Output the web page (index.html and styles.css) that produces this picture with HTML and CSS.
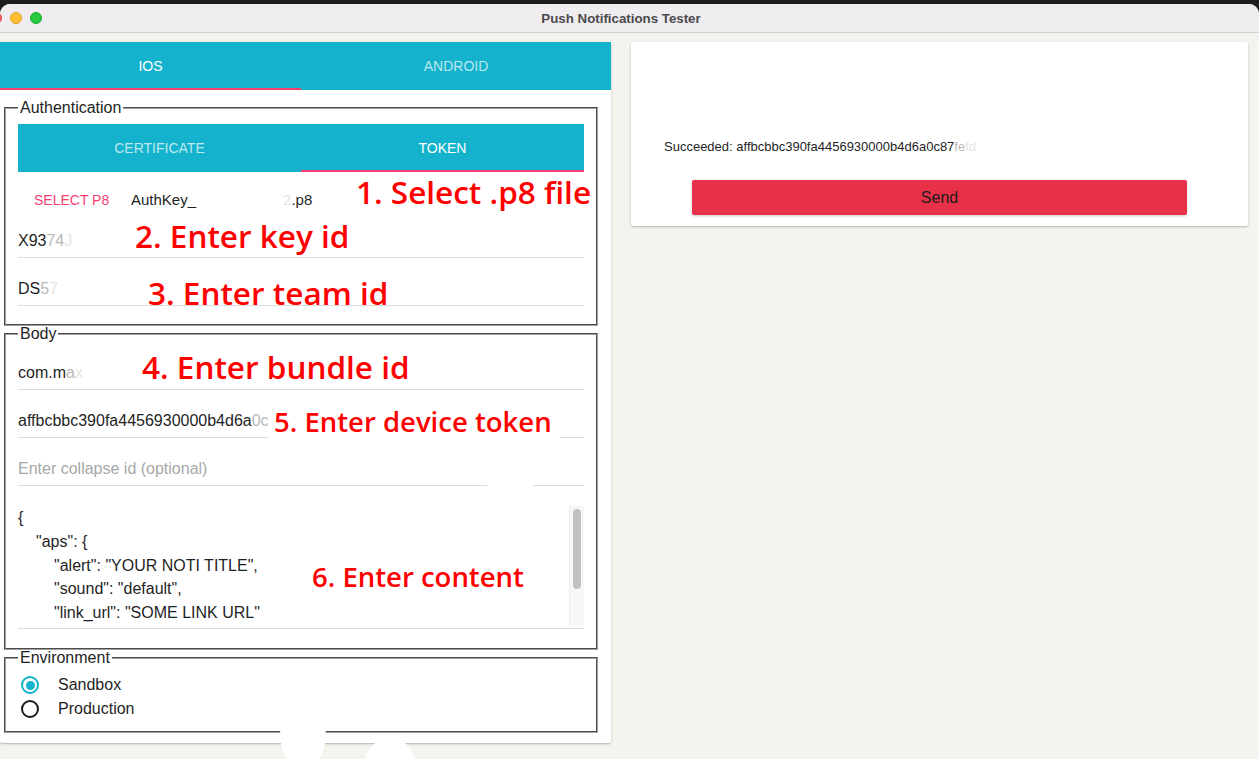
FILE: index.html
```html
<!DOCTYPE html>
<html>
<head>
<meta charset="utf-8">
<title>Push Notifications Tester</title>
<link rel="stylesheet" href="styles.css">
</head>
<body>
<div class="window">
  <div class="titlebar">
    <div class="lights">
      <span class="light red"></span>
      <span class="light yellow"></span>
      <span class="light green"></span>
    </div>
    <div class="title">Push Notifications Tester</div>
    <div></div>
  </div>
  <div class="content">
    <div class="card left">
      <div class="tabs main-tabs">
        <div class="tab first active">IOS</div>
        <div class="tab">ANDROID</div>
      </div>
      <div class="forms">
        <fieldset class="group auth">
          <legend>Authentication</legend>
          <div class="tabs sub-tabs">
            <div class="tab">CERTIFICATE</div>
            <div class="tab active">TOKEN</div>
          </div>
          <div class="file-row">
            <span class="btn-text">SELECT P8</span>
            <span class="file-name">AuthKey_<span class="gap"></span><span class="fade2">2</span>.p8</span>
          </div>
          <div class="field"><span>X93<span class="fade1">74</span><span class="fade2">J</span></span></div>
          <div class="field"><span>DS<span class="fade1">5</span><span class="fade2">7</span></span></div>
        </fieldset>
        <fieldset class="group body">
          <legend>Body</legend>
          <div class="field"><span>com.m<span class="fade1">a</span><span class="fade2">x</span></span></div>
          <div class="field"><span>affbcbbc390fa4456930000b4d6a<span class="fade1">0c</span></span></div>
          <div class="field placeholder"><span>Enter collapse id (optional)</span></div>
          <div class="editor">
            <div class="code">
              <div class="line">{</div>
              <div class="line i1">"aps": {</div>
              <div class="line i2">"alert": "YOUR NOTI TITLE",</div>
              <div class="line i2">"sound": "default",</div>
              <div class="line i2">"link_url": "SOME LINK URL"</div>
            </div>
            <div class="scrollbar"><div class="thumb"></div></div>
          </div>
        </fieldset>
        <fieldset class="group env">
          <legend>Environment</legend>
          <div class="radio-row"><span class="radio checked"></span><span class="radio-label">Sandbox</span></div>
          <div class="radio-row"><span class="radio"></span><span class="radio-label">Production</span></div>
        </fieldset>
      </div>

      <div class="note n1">1. Select .p8 file</div>
      <div class="note n2">2. Enter key id</div>
      <div class="note n3">3. Enter team id</div>
      <div class="note n4">4. Enter bundle id</div>
      <div class="note small n5">5. Enter device token</div>
      <div class="note small n6">6. Enter content</div>
      <div class="mask m1"></div>
    </div>

    <div class="card right">
      <div class="result">Succeeded: affbcbbc390fa4456930000b4d6a0c87<span class="fade1">fe</span><span class="fade2">fd</span></div>
      <div class="send">Send</div>
    </div>
  </div>
  <div class="blob b1"></div>
  <div class="blob b2"></div>
</div>
</body>
</html>
```
FILE: styles.css
```css
html, body {
  margin: 0;
  padding: 0;
}
body {
  width: 1259px;
  height: 759px;
  overflow: hidden;
  background: #1d1d1f;
  font-family: "Liberation Sans", Arial, sans-serif;
  color: #1f1f1f;
}
.window {
  position: relative;
  margin-top: 4px;
  height: 755px;
  background: #f4f3ed;
  border-radius: 10px 10px 0 0;
  overflow: hidden;
}
.titlebar {
  height: 28px;
  margin-left: -17px;
  background: #efedf0;
  border-bottom: 1px solid #d3d1d3;
  display: grid;
  grid-template-columns: 1fr auto 1fr;
  align-items: center;
}
.lights {
  display: flex;
  gap: 8px;
  margin-left: 7px;
}
.light {
  width: 12px;
  height: 12px;
  border-radius: 50%;
  box-sizing: border-box;
}
.red { background: #fe5f57; border: 0.5px solid #e0443e; }
.yellow { background: #febc2e; border: 0.5px solid #dea123; }
.green { background: #28c840; border: 0.5px solid #1aab29; }
.title {
  font-size: 13.3px;
  font-weight: bold;
  color: #4b4a4c;
}
.content {
  display: flex;
  align-items: flex-start;
  gap: 20px;
  padding-top: 9px;
}
.card {
  background: #fff;
  border-radius: 2px;
  box-shadow: 0 1px 3px rgba(0,0,0,0.18), 0 1px 1px rgba(0,0,0,0.10);
}
.left {
  width: 611px;
  position: relative;
}
.tabs {
  display: flex;
  background: #14b2cc;
}
.tab {
  flex: 1;
  display: flex;
  align-items: center;
  justify-content: center;
  color: rgba(255,255,255,0.72);
  font-size: 14px;
  box-sizing: border-box;
  border-bottom: 2px solid transparent;
  padding-top: 2px;
}
.tab.active {
  color: #fff;
  border-bottom-color: #f73f72;
}
.main-tabs .tab { height: 48px; }
.main-tabs .tab.first { flex: 0 0 301px; }
.sub-tabs { margin-top: 8px; }
.sub-tabs .tab { height: 48px; }

.forms {
  padding: 10px 13px 10px 4px;
}
.group {
  margin: 0;
  border: 2px groove #a0a0a0;
  padding: 0 12px;
  min-width: 0;
}
.group legend {
  font-size: 16px;
  line-height: 16px;
  padding: 0 2px;
  color: #1f1f1f;
}
.auth { padding-bottom: 18px; }
.body { padding-bottom: 19px; }
.env { padding-top: 7px; padding-bottom: 10px; }

.file-row {
  height: 38px;
  display: flex;
  align-items: flex-end;
  font-size: 14px;
  line-height: 18px;
  padding-bottom: 1px;
  box-sizing: border-box;
}
.btn-text {
  color: #f73f72;
  padding: 0 16px;
  width: 113px;
  box-sizing: border-box;
}
.file-name {
  color: #1f1f1f;
  font-size: 15px;
}
.gap { display: inline-block; width: 87px; }
.field {
  height: 48px;
  box-sizing: border-box;
  border-bottom: 1px solid #dcdcdc;
  display: flex;
  align-items: flex-end;
  padding-bottom: 7px;
  font-size: 16px;
  line-height: 18px;
  color: #1f1f1f;
}
.field.placeholder { color: #a8a8a8; }
.fade1 { color: #b8b8b8; }
.fade2 { color: #e4e4e4; }

.editor {
  margin-top: 20px;
  height: 123px;
  border-bottom: 1px solid #dcdcdc;
  box-sizing: border-box;
  display: flex;
}
.code {
  flex: 1;
  font-size: 16px;
  line-height: 23.8px;
  color: #1f1f1f;
}
.line { white-space: nowrap; }
.i1 { padding-left: 18px; }
.i2 { padding-left: 36px; }
.scrollbar {
  width: 15px;
  height: 120px;
  background: #f7f7f7;
  border-left: 1px solid #ececec;
  box-sizing: border-box;
  padding: 3px 0 0 3px;
}
.thumb {
  width: 8px;
  height: 80px;
  border-radius: 4px;
  background: #c2c2c2;
}

.radio-row {
  height: 24px;
  display: flex;
  align-items: center;
  font-size: 16px;
}
.radio {
  width: 18px;
  height: 18px;
  margin-left: 3px;
  border: 2px solid #1a1a1a;
  border-radius: 50%;
  box-sizing: border-box;
  display: flex;
  align-items: center;
  justify-content: center;
}
.radio.checked { border-color: #14b2cc; }
.radio.checked::after {
  content: "";
  width: 9px;
  height: 9px;
  border-radius: 50%;
  background: #14b2cc;
}
.radio-label { margin-left: 19px; }

.note {
  position: absolute;
  font-family: "Open Sans", "Noto Sans", sans-serif;
  font-weight: 600;
  font-size: 31.5px;
  line-height: 38px;
  color: #ff0000;
  white-space: nowrap;
}
.note.small {
  font-size: 27.5px;
  line-height: 34px;
}
.n1 { left: 356px; top: 131px; }
.n2 { left: 135px; top: 175px; }
.n3 { left: 148px; top: 232px; }
.n4 { left: 142px; top: 306px; }
.n5 { left: 268px; top: 363px; padding: 0 8px 0 6px; background: #fff; }
.n6 { left: 312px; top: 518px; }
.mask {
  position: absolute;
  background: #fff;
}
.m1 { left: 485px; top: 425px; width: 51px; height: 26px; border-radius: 50%; }

.right {
  width: 617px;
  height: 184px;
  box-sizing: border-box;
  padding-top: 96px;
}
.result {
  padding-left: 33px;
  font-size: 13px;
  line-height: 18px;
  color: #1f1f1f;
}
.send {
  width: 495px;
  height: 35px;
  margin: 24px auto 0;
  background: #e83149;
  border-radius: 2px;
  box-shadow: 0 1px 3px rgba(0,0,0,0.2);
  display: flex;
  align-items: center;
  justify-content: center;
  font-size: 16px;
  color: #1b1b1b;
}
.blob {
  position: absolute;
  background: #fff;
  border-radius: 50%;
}
.b1 { left: 280px; top: 695px; width: 46px; height: 70px; }
.b2 { left: 365px; top: 734px; width: 50px; height: 50px; }
```
